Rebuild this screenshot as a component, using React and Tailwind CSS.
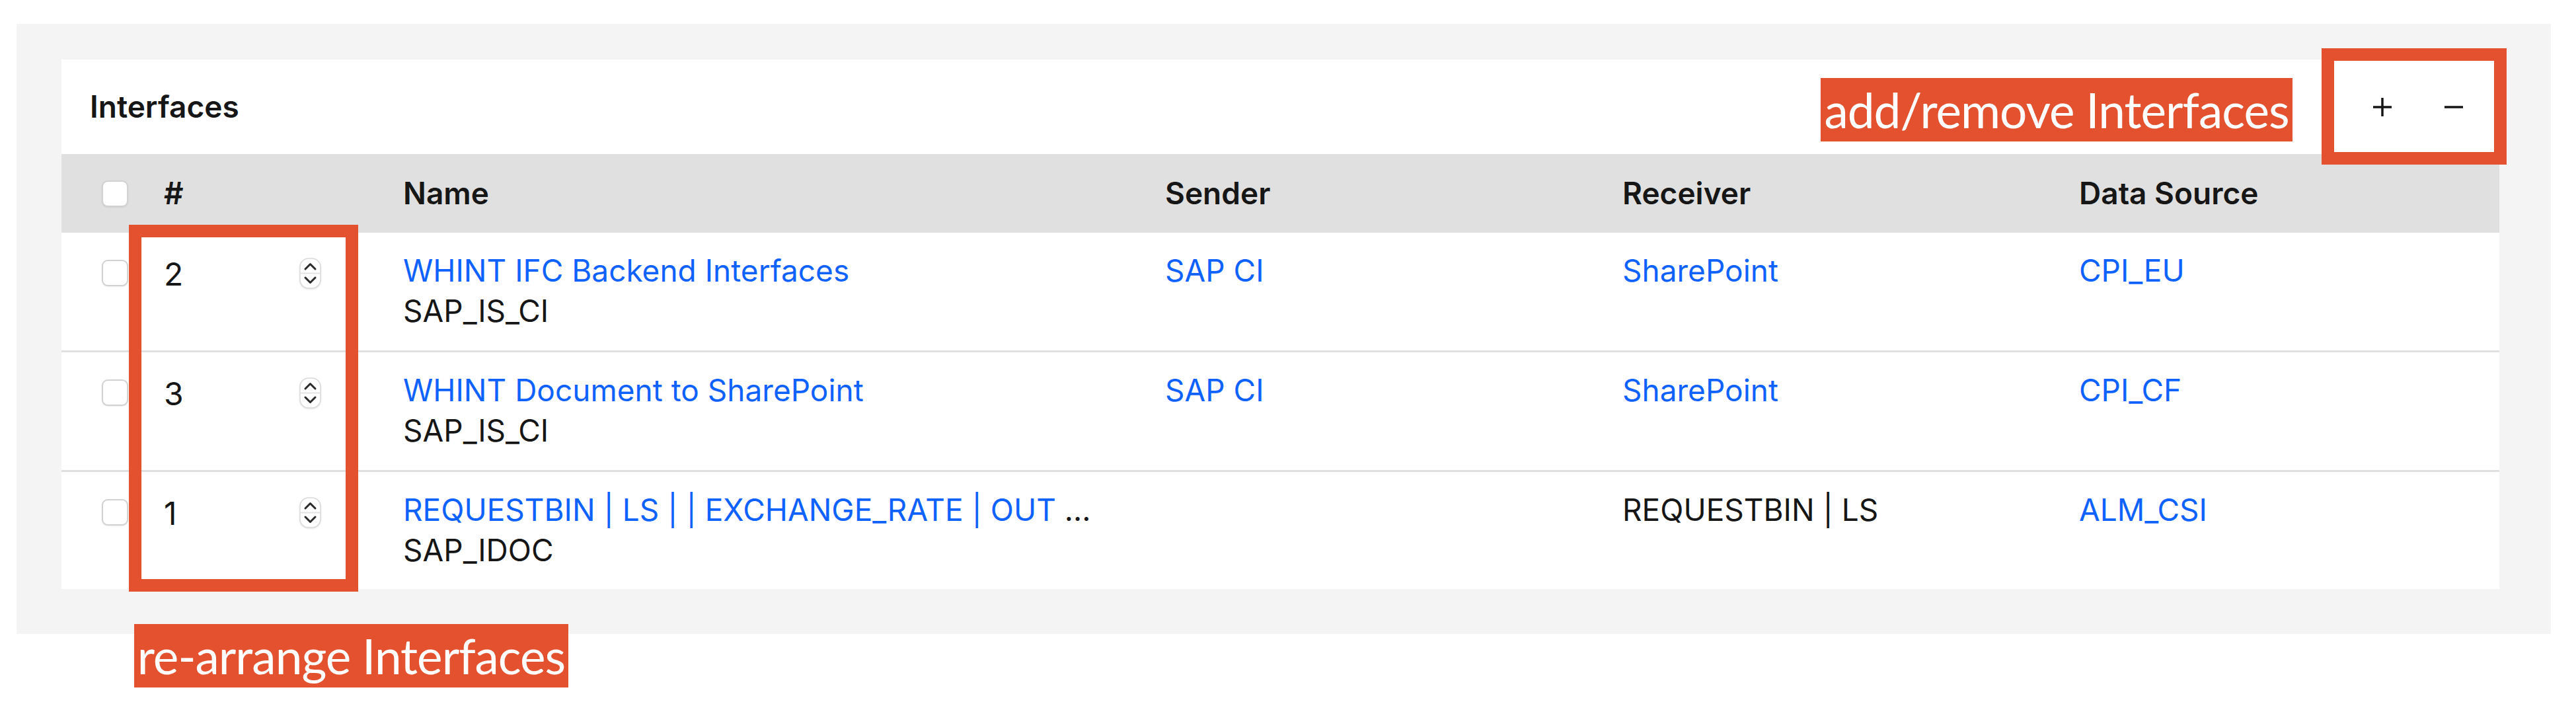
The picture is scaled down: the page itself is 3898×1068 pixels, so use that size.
import React from 'react';

const rows = [
  { n: '2', name: 'WHINT IFC Backend Interfaces', type: 'SAP_IS_CI', sender: 'SAP CI', receiver: 'SharePoint', receiverLink: true, ds: 'CPI_EU' },
  { n: '3', name: 'WHINT Document to SharePoint', type: 'SAP_IS_CI', sender: 'SAP CI', receiver: 'SharePoint', receiverLink: true, ds: 'CPI_CF' },
  { n: '1', name: 'REQUESTBIN | LS | | EXCHANGE_RATE | OUT', more: true, type: 'SAP_IDOC', sender: '', receiver: 'REQUESTBIN | LS', receiverLink: false, ds: 'ALM_CSI' },
];

function Checkbox() {
  return <div className="h-[40px] w-[40px] rounded-[9px] border-2 border-[#d2d2d2] bg-white shadow-[0_1px_2px_rgba(0,0,0,0.08)]" />;
}

function Spinner() {
  return (
    <svg width="33" height="47" viewBox="0 0 33 47" className="drop-shadow-[0_1px_1px_rgba(0,0,0,0.12)]">
      <rect x="1" y="1" width="31" height="45" rx="13" fill="#fff" stroke="#dadada" strokeWidth="1.5" />
      <line x1="2" y1="23.5" x2="31" y2="23.5" stroke="#e2e2e2" strokeWidth="2" />
      <polyline points="9,17 16.5,9.5 24,17" fill="none" stroke="#2a2a2a" strokeWidth="3" strokeLinecap="round" strokeLinejoin="round" />
      <polyline points="9,30 16.5,37.5 24,30" fill="none" stroke="#2a2a2a" strokeWidth="3" strokeLinecap="round" strokeLinejoin="round" />
    </svg>
  );
}

function PlusIcon() {
  return (
    <svg width="28" height="28" viewBox="0 0 28 28">
      <line x1="14" y1="0" x2="14" y2="28" stroke="#161616" strokeWidth="3.5" />
      <line x1="0" y1="14" x2="28" y2="14" stroke="#161616" strokeWidth="3.5" />
    </svg>
  );
}

function MinusIcon() {
  return (
    <svg width="28" height="28" viewBox="0 0 28 28">
      <line x1="0" y1="14" x2="28" y2="14" stroke="#161616" strokeWidth="3.5" />
    </svg>
  );
}

export default function App() {
  return (
    <div className="relative h-[1068px] w-[3898px] overflow-hidden bg-white pl-[25px] pt-[36px] font-['Inter',sans-serif] text-[46px] leading-[61px] text-[#161616]">
      <div className="w-[3835px] bg-[#f4f4f4] pb-[68px] pl-[68px] pt-[54px]">
        <div className="w-[3689px] bg-white">
          {/* toolbar */}
          <div className="flex h-[143px] items-center justify-between pl-[43px] pr-[15px]">
            <h2 className="font-semibold">Interfaces</h2>
            <div className="flex h-full">
              <button className="flex w-[108px] items-center justify-center"><PlusIcon /></button>
              <button className="flex w-[108px] items-center justify-center"><MinusIcon /></button>
            </div>
          </div>

          {/* header */}
          <div className="flex h-[119px] items-center bg-[#e0e0e0] pl-[61px] font-semibold">
            <div className="w-[94px]"><Checkbox /></div>
            <div className="w-[362px]">#</div>
            <div className="w-[1153px]">Name</div>
            <div className="w-[692px]">Sender</div>
            <div className="w-[691px]">Receiver</div>
            <div>Data Source</div>
          </div>

          {rows.map((r, i) => (
            <div
              key={r.n}
              className={
                i < rows.length - 1
                  ? 'flex h-[181px] items-start border-b-[3px] border-[#e0e0e0] pl-[61px] pt-[27px]'
                  : 'flex h-[177px] items-start pl-[61px] pt-[27px]'
              }
            >
              <div className="mt-[14px] w-[94px]"><Checkbox /></div>
              <div className="w-[362px]">
                <div className="flex w-[238px] items-start justify-between">
                  <span className="mt-[5px] text-[48px]">{r.n}</span>
                  <div className="mt-[11px]"><Spinner /></div>
                </div>
              </div>
              <div className="w-[1153px]">
                <div className="text-[#0f62fe]">
                  {r.name}
                  {r.more && <span className="text-[#161616]"> ...</span>}
                </div>
                <div>{r.type}</div>
              </div>
              <div className="w-[692px] text-[#0f62fe]">{r.sender}</div>
              <div className={r.receiverLink ? 'w-[691px] text-[#0f62fe]' : 'w-[691px]'}>{r.receiver}</div>
              <div className="text-[#0f62fe]">{r.ds}</div>
            </div>
          ))}
        </div>
      </div>

      {/* annotations */}
      <div className="absolute left-[195px] top-[340px] h-[555px] w-[347px] border-[19px] border-[#e4512f]" />
      <div className="absolute left-[3513px] top-[73px] h-[176px] w-[280px] border-[19px] border-[#e4512f]" />
      <div className="absolute left-[2755px] top-[118px] flex h-[96px] w-[714px] items-center justify-center whitespace-nowrap bg-[#e4512f] font-['Lato',sans-serif] text-[73px] leading-[96px] tracking-[-1px] text-white">
        add/remove Interfaces
      </div>
      <div className="absolute left-[203px] top-[944px] flex h-[96px] w-[657px] items-center justify-center whitespace-nowrap bg-[#e4512f] font-['Lato',sans-serif] text-[73px] leading-[96px] tracking-[-1px] text-white">
        re-arrange Interfaces
      </div>
    </div>
  );
}
